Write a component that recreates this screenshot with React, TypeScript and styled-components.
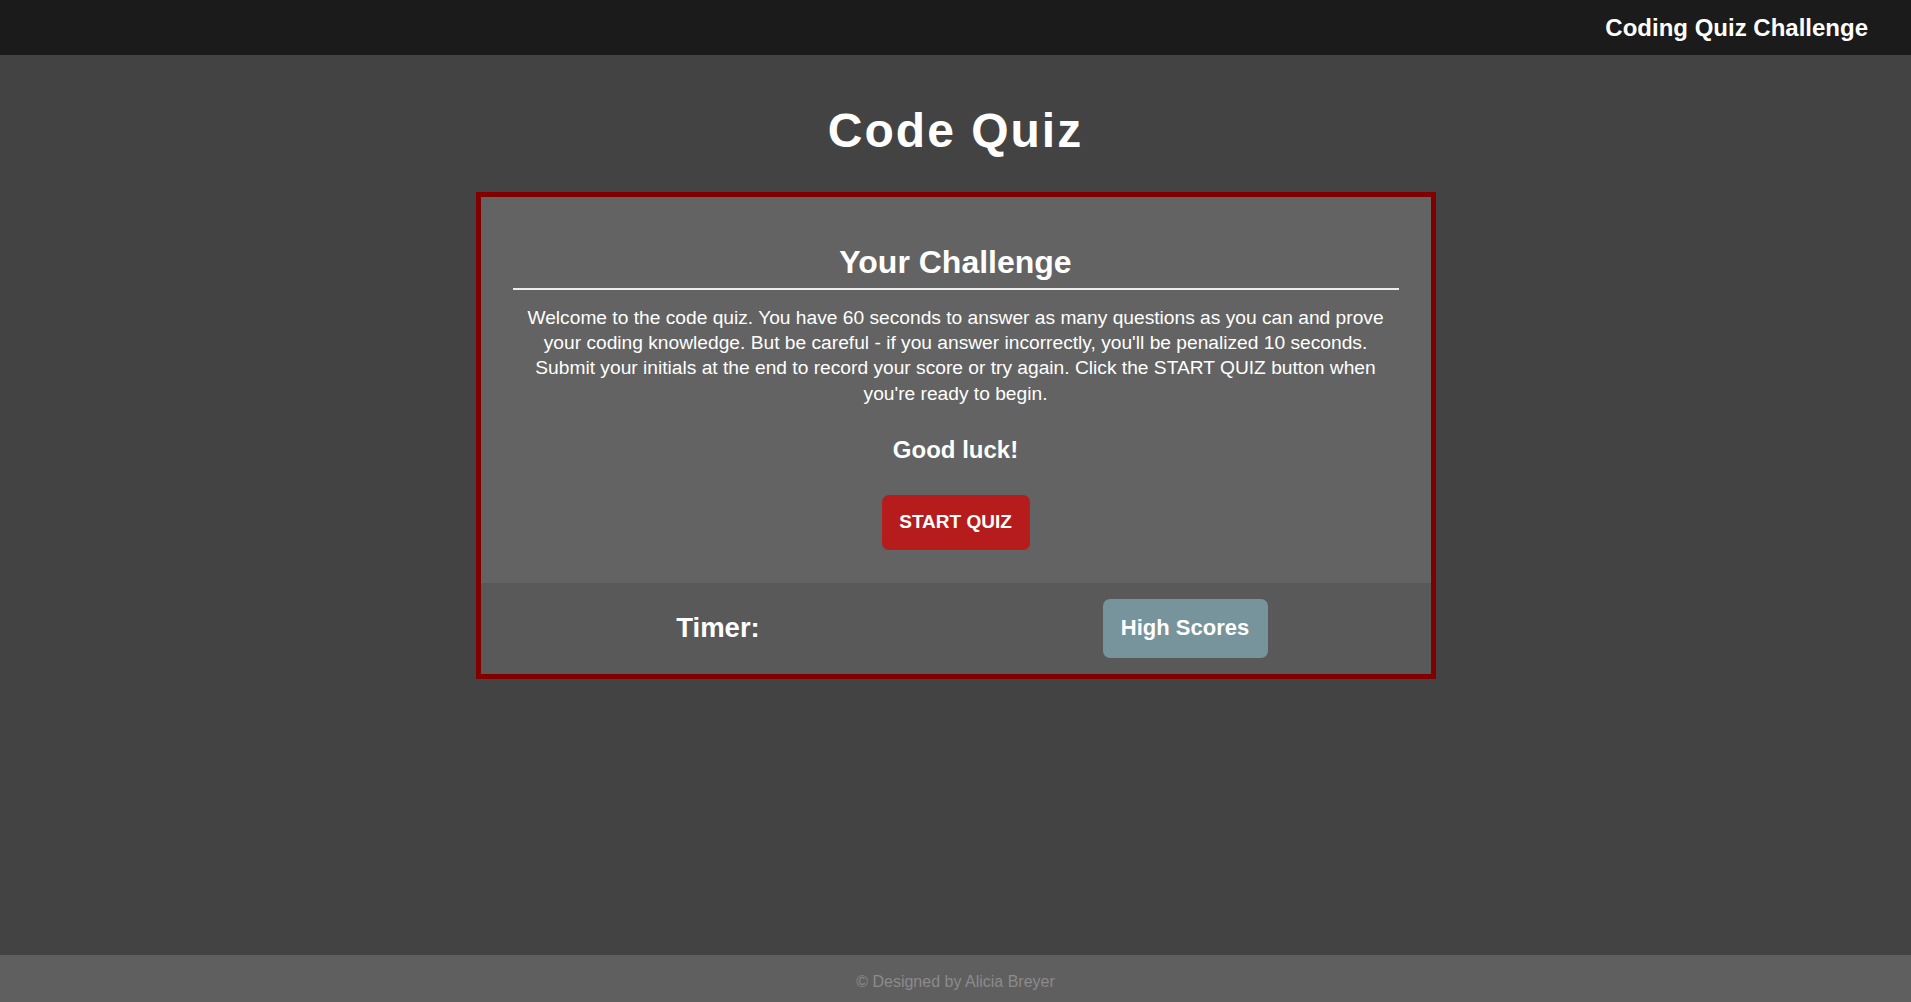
import React from "react";
import styled, { createGlobalStyle } from "styled-components";

const GlobalStyle = createGlobalStyle`
  html, body {
    margin: 0;
    padding: 0;
    background: #434343;
    font-family: "Liberation Sans", Arial, sans-serif;
    color: #ffffff;
  }
  * { box-sizing: border-box; }
`;

const Page = styled.div`
  min-height: 100vh;
  display: flex;
  flex-direction: column;
`;

const TopBar = styled.header`
  height: 55px;
  background: #1b1b1b;
  display: flex;
  align-items: center;
  justify-content: flex-end;
  padding: 0 43px 0 0;
`;

const Brand = styled.div`
  font-size: 24px;
  font-weight: 700;
  color: #ffffff;
`;

const Main = styled.main`
  flex: 1;
  display: flex;
  flex-direction: column;
  align-items: center;
`;

const Title = styled.h1`
  margin: 47px 0 32px;
  font-size: 48px;
  line-height: 58px;
  font-weight: 700;
  letter-spacing: 2px;
  color: #ffffff;
`;

const Card = styled.section`
  width: 960px;
  border: 5px solid #800000;
  display: flex;
  flex-direction: column;
`;

const Intro = styled.div`
  background: #636363;
  padding: 46px 32px 33px;
  display: flex;
  flex-direction: column;
  align-items: center;
  text-align: center;
`;

const Heading = styled.h2`
  align-self: stretch;
  margin: 0;
  padding-bottom: 7px;
  border-bottom: 2px solid #ececec;
  font-size: 32px;
  line-height: 38px;
  font-weight: 700;
`;

const Text = styled.p`
  margin: 15px 0 0;
  font-size: 19.2px;
  line-height: 25.2px;
`;

const Luck = styled.h3`
  margin: 30px 0 0;
  font-size: 24px;
  line-height: 28px;
  font-weight: 700;
`;

const StartButton = styled.button`
  margin-top: 31px;
  width: 148px;
  height: 55px;
  border: none;
  border-radius: 7px;
  background: #b71c1c;
  color: #ffffff;
  font-family: inherit;
  font-size: 19px;
  font-weight: 700;
  cursor: pointer;
`;

const Bottom = styled.div`
  background: #595959;
  height: 91px;
  display: grid;
  grid-template-columns: 1fr 1fr;
  align-items: center;
  justify-items: center;
`;

const Timer = styled.div`
  font-size: 27.5px;
  font-weight: 700;
`;

const ScoresButton = styled.button`
  margin-right: 16px;
  width: 165px;
  height: 59px;
  border: none;
  border-radius: 7px;
  background: #77939c;
  color: #ffffff;
  font-family: inherit;
  font-size: 22px;
  font-weight: 700;
  cursor: pointer;
`;

const Footer = styled.footer`
  height: 47px;
  padding-top: 7px;
  background: #5f5f5f;
  display: flex;
  align-items: center;
  justify-content: center;
  color: #8b8b8b;
  font-size: 16px;
`;

export default function App() {
  return (
    <Page>
      <GlobalStyle />
      <TopBar>
        <Brand>Coding Quiz Challenge</Brand>
      </TopBar>
      <Main>
        <Title>Code Quiz</Title>
        <Card>
          <Intro>
            <Heading>Your Challenge</Heading>
            <Text>
              Welcome to the code quiz. You have 60 seconds to answer as many questions as you can and prove
              your coding knowledge. But be careful - if you answer incorrectly, you'll be penalized 10 seconds.
              Submit your initials at the end to record your score or try again. Click the START QUIZ button when
              you're ready to begin.
            </Text>
            <Luck>Good luck!</Luck>
            <StartButton>START QUIZ</StartButton>
          </Intro>
          <Bottom>
            <Timer>Timer:</Timer>
            <ScoresButton>High Scores</ScoresButton>
          </Bottom>
        </Card>
      </Main>
      <Footer>© Designed by Alicia Breyer</Footer>
    </Page>
  );
}
